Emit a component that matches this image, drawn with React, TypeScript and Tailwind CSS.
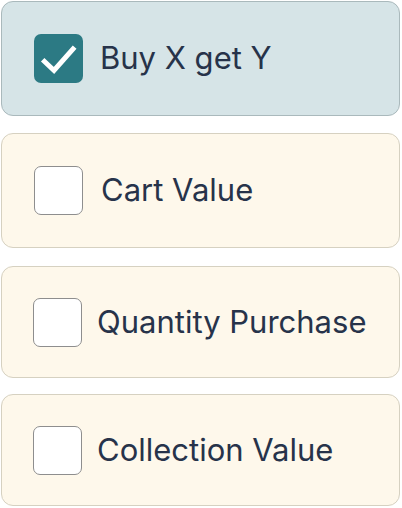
import { useState } from "react";

interface OptionCardProps {
  label: string;
  checked: boolean;
  className: string;
  onToggle: () => void;
}

const OptionCard = ({ label, checked, className, onToggle }: OptionCardProps) => {
  return (
    <button
      type="button"
      onClick={onToggle}
      className={`flex w-[399px] items-center rounded-[12px] border-[1.5px] text-left ${
        checked ? "border-[#aab9bc] bg-[#d6e4e7]" : "border-[#d6d1c1] bg-[#fef8eb]"
      } ${className}`}
    >
      <span
        className={`flex h-[49px] w-[49px] shrink-0 items-center justify-center rounded-[7px] ${
          checked ? "bg-[#2c7a84]" : "border-[1.5px] border-[#8e8e8e] bg-white"
        }`}
      >
        {checked && (
          <svg width="49" height="49" viewBox="0 0 49 49" fill="none">
            <path
              d="M10.5 27.5 L20 36.5 L39 15"
              stroke="white"
              strokeWidth="5"
              strokeLinecap="square"
            />
          </svg>
        )}
      </span>
      <span className="text-[31px] font-normal text-[#27334a]">{label}</span>
    </button>
  );
};

const App = () => {
  const [selected, setSelected] = useState("Buy X get Y");
  const options = [
    { label: "Buy X get Y", className: "h-[115px] pl-[32px] gap-[17px]" },
    { label: "Cart Value", className: "mt-[17px] h-[115px] pl-[32px] gap-[18px]" },
    { label: "Quantity Purchase", className: "mt-[18px] h-[112px] pl-[31px] gap-[15px]" },
    { label: "Collection Value", className: "mt-[16px] h-[112px] pl-[31px] gap-[15px]" },
  ];

  return (
    <div
      className="flex min-h-[508px] flex-col bg-white pt-px pl-px"
      style={{ fontFamily: "Inter, 'Noto Sans', sans-serif" }}
    >
      {options.map((option) => (
        <OptionCard
          key={option.label}
          label={option.label}
          className={option.className}
          checked={selected === option.label}
          onToggle={() => setSelected(option.label)}
        />
      ))}
    </div>
  );
};

export default App;
